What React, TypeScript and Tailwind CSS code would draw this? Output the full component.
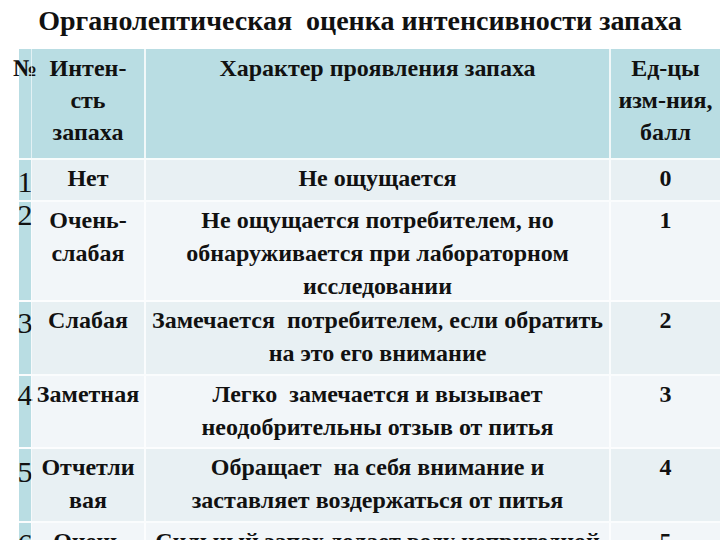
import React from 'react'

type Row = {
  n: string
  name: string[]
  desc: string[]
  score: string
  h: string
  bg: string
  np: string
}

const rows: Row[] = [
  { n: '1', name: ['Нет'], desc: ['Не ощущается'], score: '0', h: 'h-[42px]', bg: 'bg-[#e8f0f3]', np: 'mt-[5px]' },
  {
    n: '2',
    name: ['Очень-', 'слабая'],
    desc: ['Не ощущается потребителем, но', 'обнаруживается при лабораторном', 'исследовании'],
    score: '1',
    h: 'h-[100px]',
    bg: 'bg-[#f2f6f9]',
    np: 'mt-[-4px]',
  },
  {
    n: '3',
    name: ['Слабая'],
    desc: ['Замечается  потребителем, если обратить', 'на это его внимание'],
    score: '2',
    h: 'h-[74px]',
    bg: 'bg-[#e8f0f3]',
    np: 'mt-[4px]',
  },
  {
    n: '4',
    name: ['Заметная'],
    desc: ['Легко  замечается и вызывает', 'неодобрительны отзыв от питья'],
    score: '3',
    h: 'h-[73px]',
    bg: 'bg-[#f2f6f9]',
    np: 'mt-[2px]',
  },
  {
    n: '5',
    name: ['Отчетли', 'вая'],
    desc: ['Обращает  на себя внимание и', 'заставляет воздержаться от питья'],
    score: '4',
    h: 'h-[74px]',
    bg: 'bg-[#e8f0f3]',
    np: 'mt-[6px]',
  },
  {
    n: '6',
    name: ['Очень', 'сильная'],
    desc: ['Сильный запах делает воду непригодной', 'для питья'],
    score: '5',
    h: 'h-[74px]',
    bg: 'bg-[#f2f6f9]',
    np: 'mt-[4px]',
  },
]

function Lines({ items }: { items: string[] }) {
  return (
    <>
      {items.map((t, i) => (
        <div key={i} className="whitespace-pre font-['Liberation_Serif'] font-bold">
          {t}
        </div>
      ))}
    </>
  )
}

export default function App() {
  return (
    <div className="w-[720px] h-[540px] overflow-hidden bg-white text-[#111] font-['Liberation_Serif']">
      {/* Title */}
      <div className="h-[49px] flex items-start justify-center pt-[5px]">
        <h1 className="font-['Liberation_Serif'] font-bold text-[28px] leading-[32px] whitespace-pre">
          Органолептическая  оценка интенсивности запаха
        </h1>
      </div>

      {/* Table */}
      <div className="ml-[19px] w-[701px]">
        {/* Header */}
        <div className="flex h-[111px] bg-[#b9dde3] border-b-2 border-white/90">
          <div className="w-[12px] shrink-0 flex justify-center pt-[3px]">
            <span className="font-['Liberation_Serif'] font-bold text-[24px] leading-[32px] whitespace-nowrap">№</span>
          </div>
          <div className="w-[113px] shrink-0 border-l border-white/60 text-center text-[24px] leading-[32px] pt-[3px] whitespace-nowrap flex flex-col items-center">
            <Lines items={['Интен-', 'сть', 'запаха']} />
          </div>
          <div className="w-[465px] shrink-0 border-l-2 border-white/80 text-center text-[24px] leading-[32px] pt-[3px]">
            <Lines items={['Характер проявления запаха']} />
          </div>
          <div className="flex-1 border-l-2 border-white/80 text-center text-[24px] leading-[32px] pt-[3px] whitespace-nowrap flex flex-col items-center">
            <Lines items={['Ед-цы', 'изм-ния,', 'балл']} />
          </div>
        </div>

        {rows.map((r) => (
          <div key={r.n} className={`flex ${r.h} ${r.bg} border-b-2 border-white/80`}>
            <div className="w-[12px] shrink-0 bg-[#b9dde3] flex justify-center">
              <span className={`font-['Liberation_Serif'] text-[30px] leading-[33px] ${r.np}`}>{r.n}</span>
            </div>
            <div className="w-[113px] shrink-0 border-l border-white/60 text-center text-[24px] leading-[33px] pt-[2px] whitespace-nowrap flex flex-col items-center">
              <Lines items={r.name} />
            </div>
            <div className="w-[465px] shrink-0 border-l-2 border-white/80 text-center text-[24px] leading-[33px] pt-[2px] whitespace-nowrap flex flex-col items-center">
              <Lines items={r.desc} />
            </div>
            <div className="flex-1 border-l-2 border-white/80 text-center text-[24px] leading-[33px] pt-[2px]">
              <Lines items={[r.score]} />
            </div>
          </div>
        ))}
      </div>
    </div>
  )
}
